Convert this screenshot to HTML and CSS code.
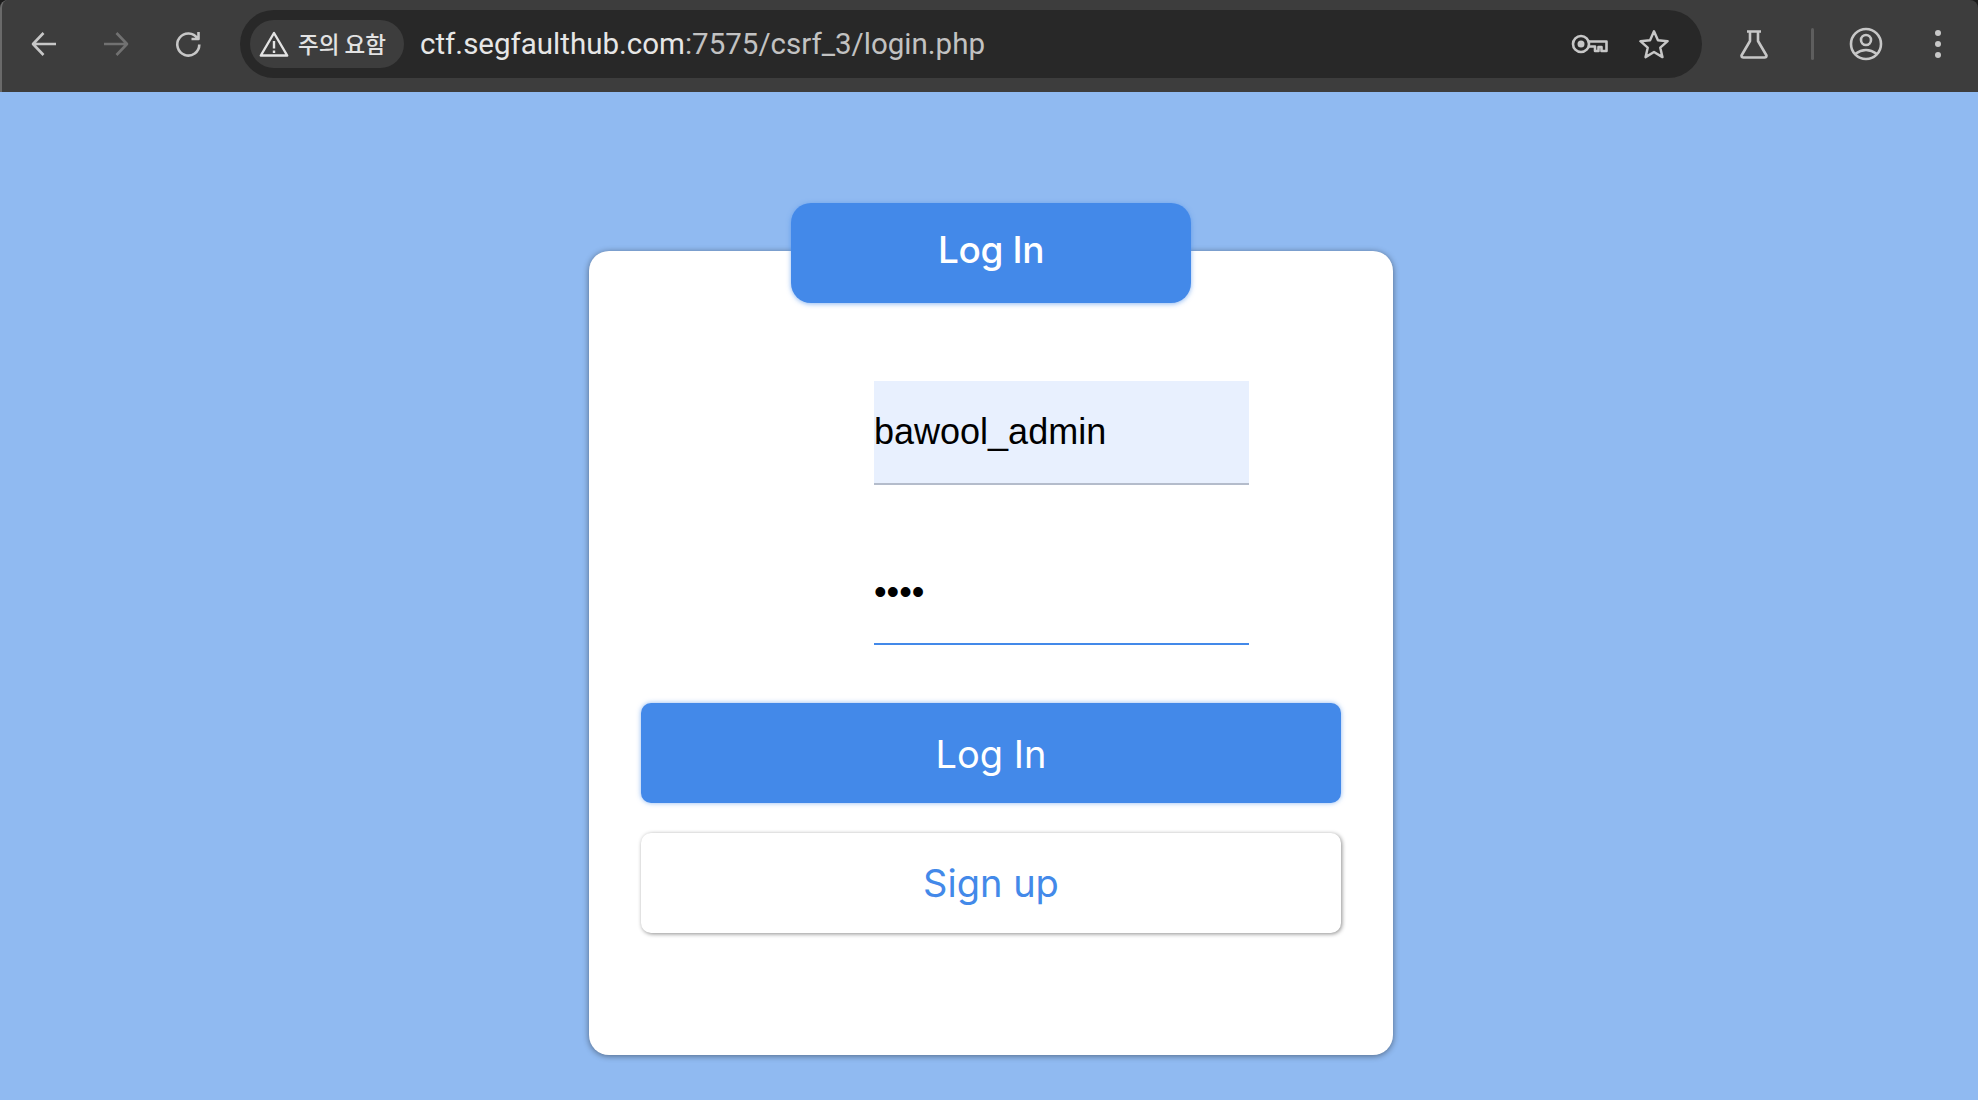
FILE: index.html
```html
<!DOCTYPE html>
<html lang="en">

<head>
    <title>Log In</title>
    <link rel="stylesheet" href="styles.css">
</head>

<body>

    <div class="window-top">
    <div class="toolbar">
        <div class="nav-buttons">
            <svg class="icon" viewBox="0 0 32 32"><path d="M28 16H6M15.500 5 5 16l10.500 11"/></svg>
            <svg class="icon icon-dim" viewBox="0 0 32 32"><path d="M4 16h22M16.500 5 27 16 16.500 27"/></svg>
            <svg class="icon" viewBox="0 0 32 32"><path d="M25.500 10.500A11 11 0 1 0 27.300 16.500M26.500 4V11H19.500"/></svg>
        </div>

        <div class="omnibox">
            <div class="chip">
                <svg class="chip-icon" viewBox="0 0 30 28"><path d="M15 3 1.800 25.500h26.400Z"/><path class="bang" d="M15 11v7.500M15 20.500v2.500"/></svg>
                <span class="chip-text">주의 요함</span>
            </div>
            <div class="url"><span class="url-host">ctf.segfaulthub.com</span>:7575/csrf_3/login.php</div>
            <svg class="icon icon-key" viewBox="0 0 38 22"><circle cx="10" cy="11" r="8"/><circle class="dot" cx="10" cy="11" r="3.500"/><path d="M17.500 8.500H35.500V18H30.500V14H27.500V18H24V13.500H17.500"/></svg>
            <svg class="icon icon-star" viewBox="0 0 32 32"><path d="M16 2.500l4.200 9.500 10.300 1-7.800 6.900 2.300 10.100-9-5.400-9 5.400 2.300-10.100-7.800-6.900 10.300-1Z"/></svg>
        </div>

        <div class="toolbar-right">
            <svg class="icon icon-flask" viewBox="0 0 32 32"><path d="M9 3.500H23M12 3.500V13L3.500 27.500Q3.500 29.500 5.500 29.500H26.500Q28.500 29.500 28.500 27.500L20 13V3.500"/></svg>
            <div class="divider"></div>
            <svg class="icon icon-profile" viewBox="0 0 34 34"><circle cx="17" cy="17" r="15"/><circle cx="17" cy="13" r="5"/><path d="M6 27Q17 19 28 27"/></svg>
            <div class="menu-dots"><i></i><i></i><i></i></div>
        </div>
    </div>
    </div>

    <div class="page">
        <div class="card">
            <div class="card-tab">Log In</div>
            <form class="login-form" onsubmit="return false">
                <input class="field field-filled" type="text" name="username" value="bawool_admin">
                <input class="field field-active" type="password" name="password" value="1234">
                <button class="btn btn-primary" type="submit">Log In</button>
                <button class="btn btn-secondary" type="button">Sign up</button>
            </form>
        </div>
    </div>

</body>
</html>
```

FILE: styles.css
```css
* {
    box-sizing: border-box;
}

body {
    margin: 0;
    height: 1100px;
    overflow: hidden;
    background-color: #90baf1;
    font-family: Inter, "Liberation Sans", sans-serif;
}

/* browser chrome */

.window-top {
    background-color: #1c1c1c;
}

.toolbar {
    height: 92px;
    display: flex;
    align-items: center;
    padding: 0 0 4px 26px;
    background-color: #3d3d3d;
    border-left: 2px solid #6a6a6a;
    border-radius: 8px 8px 0 0;
}

.icon {
    fill: none;
    stroke: #c7c7c7;
    stroke-width: 2.6;
    stroke-linejoin: round;
    flex-shrink: 0;
}

.icon-dim {
    stroke: #717171;
}

.nav-buttons {
    display: flex;
    align-items: center;
    gap: 40px;
    width: 212px;
}

.nav-buttons .icon {
    width: 32px;
    height: 32px;
}

.omnibox {
    width: 1462px;
    height: 68px;
    display: flex;
    align-items: center;
    padding: 0 33px 0 10px;
    border-radius: 34px;
    background-color: #282828;
}

.chip {
    height: 48px;
    width: 154px;
    flex-shrink: 0;
    display: flex;
    align-items: center;
    gap: 9px;
    padding-left: 9px;
    border-radius: 24px;
    background-color: #3d3d3d;
    color: #e3e3e3;
    font-family: "Noto Sans CJK KR", sans-serif;
    font-size: 22.5px;
    font-weight: 500;
}

.chip-text {
    padding-bottom: 3px;
}

.chip-icon {
    width: 30px;
    height: 28px;
    fill: none;
    stroke: #e3e3e3;
    stroke-width: 2.4;
    stroke-linejoin: round;
}

.url {
    flex: 1;
    margin-left: 16px;
    color: #c2c2c2;
    font-family: Roboto, sans-serif;
    font-size: 29.500px;
    white-space: nowrap;
}

.url-host {
    color: #e6e6e6;
}

.icon-key {
    width: 38px;
    height: 22px;
}

.dot {
    fill: #c7c7c7;
    stroke: none;
}

.icon-star {
    width: 30px;
    height: 30px;
    margin-left: 30px;
}

.toolbar-right {
    flex: 1;
    display: flex;
    align-items: center;
    padding-left: 36px;
}

.icon-flask {
    width: 32px;
    height: 32px;
}

.divider {
    width: 3px;
    height: 32px;
    margin: 0 35px 0 41px;
    border-radius: 2px;
    background-color: #5e5e5e;
}

.icon-profile {
    width: 34px;
    height: 34px;
}

.menu-dots {
    display: flex;
    flex-direction: column;
    gap: 5px;
    margin-left: 52px;
}

.menu-dots i {
    width: 6px;
    height: 6px;
    border-radius: 50%;
    background-color: #c7c7c7;
}

/* login page */

.page {
    padding: 159px 0 0 589px;
}

.card {
    display: flow-root;
    width: 804px;
    height: 804px;
    background-color: #fff;
    border-radius: 20px;
    box-shadow: 0 1px 6px rgba(0, 0, 0, 0.45);
}

.card-tab {
    width: 400px;
    height: 100px;
    margin: -48px auto 0;
    padding-bottom: 8px;
    display: flex;
    align-items: center;
    justify-content: center;
    background-color: #4389e9;
    border-radius: 20px;
    box-shadow: 0 1px 5px rgba(67, 137, 233, 0.6);
    color: #fff;
    font-size: 37px;
    font-weight: 500;
    letter-spacing: -0.4px;
}

.login-form {
    display: flex;
    flex-direction: column;
    padding: 78px 52px 0;
}

.field {
    display: block;
    width: 375px;
    height: 104px;
    margin-left: 233px;
    padding: 0;
    border: none;
    border-bottom: 2px solid #b4bccb;
    border-radius: 0;
    outline: none;
    color: #000;
    font-family: "Liberation Sans", sans-serif;
    font-size: 36px;
}

.field-filled {
    background-color: #e8f0fe;
}

.field-active {
    margin-top: 56px;
    border-bottom-color: #4389e9;
    padding-bottom: 1px;
}

.btn {
    width: 700px;
    height: 100px;
    border: none;
    border-radius: 10px;
    font-family: Inter, sans-serif;
    font-size: 38px;
    cursor: pointer;
}

.btn-primary {
    margin-top: 58px;
    padding-top: 2px;
    background-color: #4389e9;
    box-shadow: 0 0 5px rgba(67, 137, 233, 0.6);
    color: #fff;
}

.btn-secondary {
    margin-top: 30px;
    background-color: #fff;
    box-shadow: 1px 1px 4px rgba(0, 0, 0, 0.45);
    color: #4389e9;
}
```
